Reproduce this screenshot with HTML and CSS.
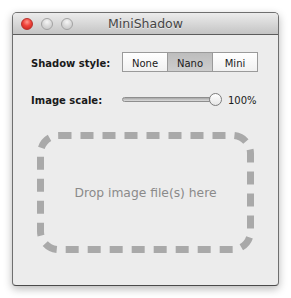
FILE: index.html
```html
<!DOCTYPE html>
<html lang="en">
<head>
    <meta charset="UTF-8">
    <title>MiniShadow</title>
    <link rel="stylesheet" href="styles.css">
</head>
<body>
    <div class="window">
        <div class="titlebar">
            <div class="lights">
                <span class="light close"></span>
                <span class="light"></span>
                <span class="light"></span>
            </div>
            <div class="title">MiniShadow</div>
            <div></div>
        </div>

        <div class="content">
            <div class="form">
                <div class="label">Shadow style:</div>
                <div class="segmented">
                    <span class="seg">None</span>
                    <span class="seg selected">Nano</span>
                    <span class="seg">Mini</span>
                </div>

                <div class="label">Image scale:</div>
                <div class="scale">
                    <div class="slider">
                        <div class="track"></div>
                        <div class="thumb"></div>
                    </div>
                    <span class="value">100%</span>
                </div>
            </div>

            <div class="dropzone">
                <svg class="dash" width="219" height="123" viewBox="0 0 219 123">
                    <rect x="4.5" y="4.5" width="210" height="114" rx="18" ry="18"
                          fill="none" stroke="#a9a9a9" stroke-width="7" stroke-dasharray="13 9"/>
                </svg>
                <span class="drop-text">Drop image file(s) here</span>
            </div>
        </div>
    </div>
</body>
</html>
```

FILE: styles.css
```css
* {
    margin: 0;
    padding: 0;
    box-sizing: border-box;
}

body {
    background: #fff;
    font-family: 'DejaVu Sans', sans-serif;
    color: #1a1a1a;
}

.window {
    margin: 12px;
    width: 267px;
    height: 274px;
    background: #ececec;
    border: 1px solid #6f6f6f;
    border-bottom-color: #4a4a4a;
    border-radius: 5px 5px 4px 4px;
    box-shadow: 0 3px 9px rgba(0, 0, 0, 0.28);
    overflow: hidden;
}

.titlebar {
    height: 22px;
    display: grid;
    grid-template-columns: 1fr auto 1fr;
    align-items: center;
    background: linear-gradient(#ececec, #c4c4c4);
    border-bottom: 1px solid #5c5c5c;
}

.lights {
    display: flex;
    gap: 8px;
    padding-left: 8px;
}

.light {
    width: 12px;
    height: 12px;
    border-radius: 50%;
    border: 1px solid #a3a3a3;
    background: radial-gradient(circle at 50% 30%, #f6f6f6 0%, #d6d6d6 55%, #c4c4c4 100%);
}

.light.close {
    border-color: #b8302b;
    background: radial-gradient(circle at 50% 30%, #ff9a8e 0%, #f0433a 45%, #c1241c 100%);
}

.title {
    font-size: 12.5px;
    color: #454545;
    text-shadow: 0 1px 0 rgba(255, 255, 255, 0.6);
}

.content {
    padding: 17px 0 0 18px;
}

.form {
    display: grid;
    grid-template-columns: 91px auto;
    row-gap: 20px;
    align-items: center;
}

.label {
    font-weight: bold;
    font-size: 10px;
    padding-top: 3px;
}

.segmented {
    display: flex;
    width: 136px;
    height: 20px;
    border: 1px solid #9a9a9a;
    background: linear-gradient(#ffffff, #f1f1f1);
}

.seg {
    flex: 1;
    display: flex;
    align-items: center;
    justify-content: center;
    font-size: 10px;
    padding-top: 2px;
}

.seg + .seg {
    border-left: 1px solid #9a9a9a;
}

.seg.selected {
    background: linear-gradient(#bdbdbd, #cdcdcd);
}

.scale {
    display: flex;
    align-items: center;
    height: 14px;
}

.slider {
    display: flex;
    align-items: center;
}

.track {
    width: 90px;
    height: 5px;
    border-radius: 3px;
    border: 1px solid #8e8e8e;
    background: linear-gradient(#a8a8a8, #dcdcdc);
}

.thumb {
    width: 13px;
    height: 13px;
    margin-left: -3px;
    border-radius: 50%;
    border: 1px solid #7c7c7c;
    background: linear-gradient(#ffffff, #e6e6e6);
}

.value {
    margin-left: 6px;
    font-size: 10px;
    padding-top: 3px;
}

.dropzone {
    position: relative;
    width: 219px;
    height: 123px;
    margin: 25px 0 0 5px;
    display: flex;
    align-items: center;
    justify-content: center;
}

.dash {
    position: absolute;
    top: 0;
    left: 0;
}

.drop-text {
    position: relative;
    font-size: 12.3px;
    color: #8a8a8a;
    padding-top: 1px;
}
```
